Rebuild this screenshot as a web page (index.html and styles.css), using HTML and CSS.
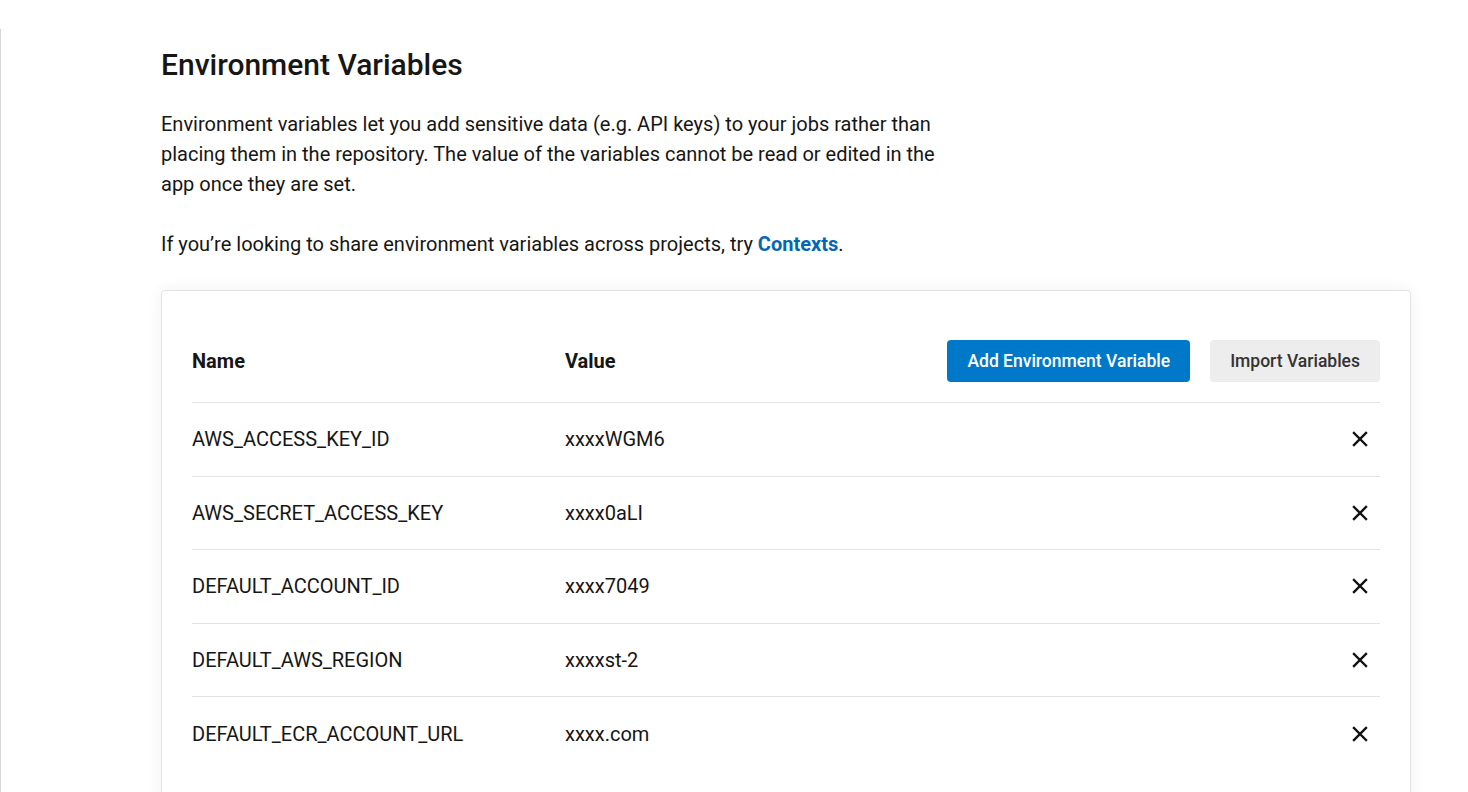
FILE: index.html
```html
<!DOCTYPE html>
<html lang="en">
<head>
<meta charset="utf-8">
<title>Environment Variables</title>
<link rel="stylesheet" href="styles.css">
</head>
<body>
<div class="page">
  <main class="main">
    <h1 class="title">Environment Variables</h1>
    <p class="lead">Environment variables let you add sensitive data (e.g. API keys) to your jobs rather than placing them in the repository. The value of the variables cannot be read or edited in the app once they are set.</p>
    <p class="lead">If you’re looking to share environment variables across projects, try <a class="link" href="#">Contexts</a>.</p>
    <section class="card">
      <div class="row head">
        <div class="cell th">Name</div>
        <div class="cell th">Value</div>
        <div class="actions">
          <button class="btn primary">Add Environment Variable</button>
          <button class="btn secondary">Import Variables</button>
        </div>
      </div>
      <div class="row">
        <div class="cell">AWS_ACCESS_KEY_ID</div>
        <div class="cell">xxxxWGM6</div>
        <button class="del" aria-label="Delete"><svg width="16" height="16" viewBox="0 0 16 16"><path d="M2 2L14 14M14 2L2 14" stroke="#111" stroke-width="2.4" stroke-linecap="square" fill="none"/></svg></button>
      </div>
      <div class="row">
        <div class="cell">AWS_SECRET_ACCESS_KEY</div>
        <div class="cell">xxxx0aLI</div>
        <button class="del" aria-label="Delete"><svg width="16" height="16" viewBox="0 0 16 16"><path d="M2 2L14 14M14 2L2 14" stroke="#111" stroke-width="2.4" stroke-linecap="square" fill="none"/></svg></button>
      </div>
      <div class="row">
        <div class="cell">DEFAULT_ACCOUNT_ID</div>
        <div class="cell">xxxx7049</div>
        <button class="del" aria-label="Delete"><svg width="16" height="16" viewBox="0 0 16 16"><path d="M2 2L14 14M14 2L2 14" stroke="#111" stroke-width="2.4" stroke-linecap="square" fill="none"/></svg></button>
      </div>
      <div class="row">
        <div class="cell">DEFAULT_AWS_REGION</div>
        <div class="cell">xxxxst-2</div>
        <button class="del" aria-label="Delete"><svg width="16" height="16" viewBox="0 0 16 16"><path d="M2 2L14 14M14 2L2 14" stroke="#111" stroke-width="2.4" stroke-linecap="square" fill="none"/></svg></button>
      </div>
      <div class="row last">
        <div class="cell">DEFAULT_ECR_ACCOUNT_URL</div>
        <div class="cell">xxxx.com</div>
        <button class="del" aria-label="Delete"><svg width="16" height="16" viewBox="0 0 16 16"><path d="M2 2L14 14M14 2L2 14" stroke="#111" stroke-width="2.4" stroke-linecap="square" fill="none"/></svg></button>
      </div>
    </section>
  </main>
</div>
</body>
</html>
```
FILE: styles.css
```css
html, body {
  margin: 0;
  padding: 0;
  background: #fff;
  font-family: Roboto, "Liberation Sans", sans-serif;
  color: #161616;
  overflow: hidden;
}
.page {
  padding-top: 29px;
  height: 792px;
  box-sizing: border-box;
}
.main {
  border-left: 1px solid #d6d6d6;
  height: 100%;
  padding: 16px 57px 0 160px;
  box-sizing: border-box;
}
.title {
  margin: 0 0 24px;
  font-size: 30px;
  line-height: 40px;
  font-weight: 500;
}
.lead {
  margin: 0 0 30px;
  font-size: 20px;
  line-height: 30px;
  max-width: 790px;
}
.link {
  color: #0567b2;
  font-weight: 700;
  text-decoration: none;
}
.card {
  margin-top: 31px;
  border: 1px solid #e3e3e3;
  border-radius: 4px;
  box-shadow: 0 0 16px rgba(0, 0, 0, 0.06);
  padding: 49px 30px 40px 30px;
  background: #fff;
}
.row {
  display: grid;
  grid-template-columns: 373px 1fr auto;
  align-items: center;
  height: 73.5px;
  box-sizing: border-box;
  border-bottom: 1px solid #e3e3e3;
  font-size: 20px;
}
.row.last {
  border-bottom: none;
}
.row.head {
  height: 63px;
  align-items: start;
  padding-bottom: 21px;
}
.th {
  font-weight: 700;
  line-height: 42px;
}
.actions {
  display: flex;
  gap: 20px;
}
.btn {
  height: 42px;
  border: none;
  border-radius: 4px;
  font-family: Roboto, "Liberation Sans", sans-serif;
  font-size: 17.5px;
  font-weight: 500;
  padding: 0 20px;
  cursor: pointer;
}
.btn.primary {
  background: #0078ca;
  color: #fff;
}
.btn.secondary {
  background: #ededed;
  color: #333;
}
.del {
  width: 40px;
  height: 40px;
  border: none;
  background: none;
  padding: 0;
  display: flex;
  align-items: center;
  justify-content: center;
  cursor: pointer;
}
```
